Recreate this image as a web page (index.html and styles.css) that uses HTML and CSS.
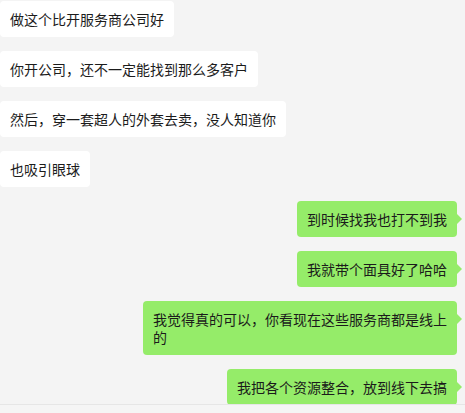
FILE: index.html
```html
<!DOCTYPE html>
<html lang="zh-CN">
<head>
<meta charset="utf-8">
<link rel="stylesheet" href="styles.css">
</head>
<body>
<div class="window">
  <div class="chat">
    <div class="row left"><div class="bubble">做这个比开服务商公司好</div></div>
    <div class="row left"><div class="bubble">你开公司，还不一定能找到那么多客户</div></div>
    <div class="row left"><div class="bubble">然后，穿一套超人的外套去卖，没人知道你</div></div>
    <div class="row left"><div class="bubble">也吸引眼球</div></div>
    <div class="row right"><div class="bubble">到时候找我也打不到我</div></div>
    <div class="row right"><div class="bubble">我就带个面具好了哈哈</div></div>
    <div class="row right"><div class="bubble">我觉得真的可以，你看现在这些服务商都是线上的</div></div>
    <div class="row right"><div class="bubble">我把各个资源整合，放到线下去搞</div></div>
  </div>
  <div class="input-bar"></div>
</div>
</body>
</html>
```

FILE: styles.css
```css
html, body {
  margin: 0;
  padding: 0;
  background: #f4f4f4;
}

.window {
  width: 465px;
  height: 413px;
  display: flex;
  flex-direction: column;
  overflow: hidden;
  font-family: "Noto Sans CJK SC", "Noto Sans", sans-serif;
  font-size: 14px;
  color: #1b1b1b;
}

.chat {
  height: 404px;
  overflow: hidden;
  display: flex;
  flex-direction: column;
  gap: 14px;
  padding: 1px 8px 0 0;
  box-sizing: border-box;
  flex-shrink: 0;
}

.row {
  display: flex;
  flex-shrink: 0;
}

.row.left {
  justify-content: flex-start;
}

.row.right {
  justify-content: flex-end;
}

.bubble {
  position: relative;
  padding: 9px 10px 9px 10px;
  line-height: 18px;
  border-radius: 4px;
  max-width: 294px;
  word-break: break-all;
}

.left .bubble {
  background: #ffffff;
}

.right .bubble {
  background: #95ec69;
}

.right .bubble::after {
  content: "";
  position: absolute;
  right: -5px;
  top: 12px;
  border-top: 6px solid transparent;
  border-bottom: 6px solid transparent;
  border-left: 6px solid #95ec69;
}

.input-bar {
  flex: 1;
  border-top: 1px solid #e6e6e6;
  background: #f5f5f5;
}
```
